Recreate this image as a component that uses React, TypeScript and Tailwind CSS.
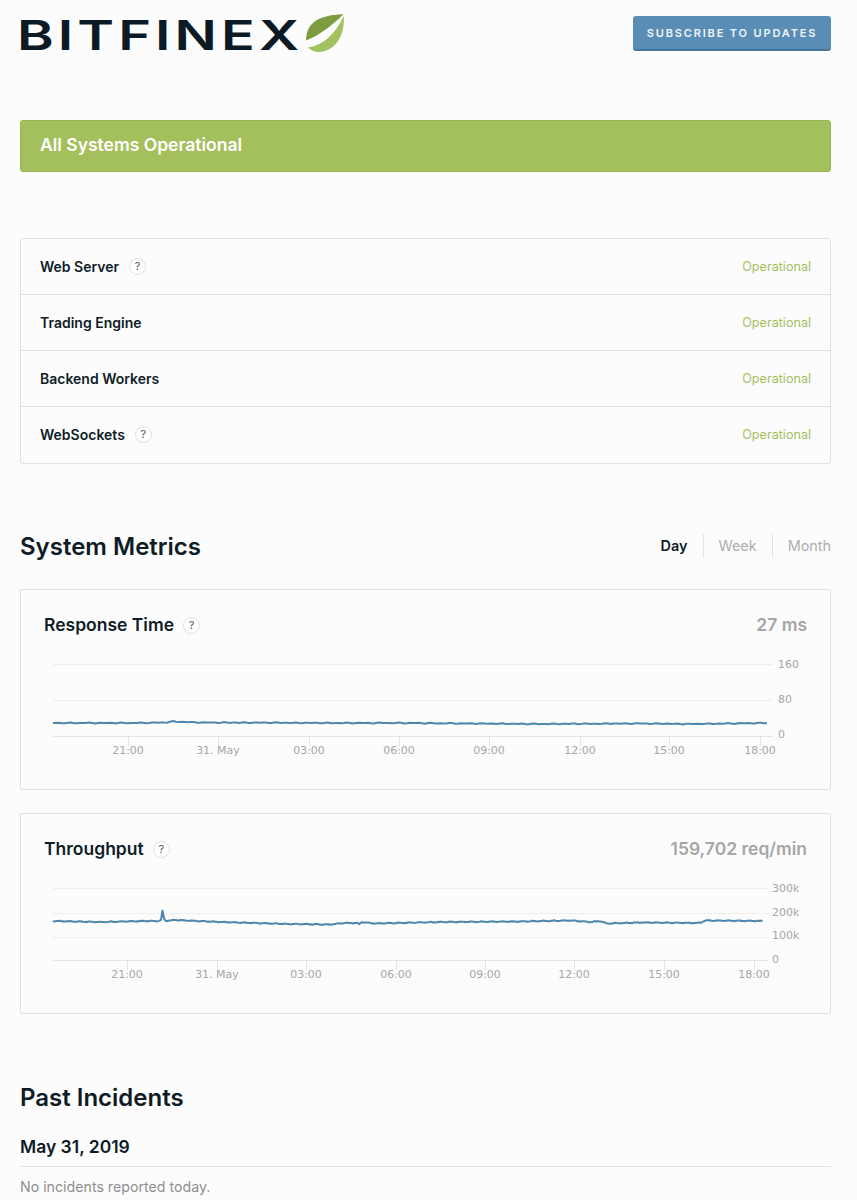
const services = [
  { name: 'Web Server', help: true, height: 'h-[55px]' },
  { name: 'Trading Engine', help: false, height: 'h-14 border-t border-[#e0e0e0]' },
  { name: 'Backend Workers', help: false, height: 'h-14 border-t border-[#e0e0e0]' },
  { name: 'WebSockets', help: true, height: 'h-[57px] border-t border-[#e0e0e0]' },
];

const timeLabels = ['21:00', '31. May', '03:00', '06:00', '09:00', '12:00', '15:00', '18:00'];

// small repeatable wobble so the lines look like real metrics
const wobble = (x: number) => Math.sin(x * 0.61) * 0.3 + Math.sin(x * 1.73 + 1) * 0.2;

const buildLine = (keys: number[][], step: number) => {
  const start = keys[0][0];
  const end = keys[keys.length - 1][0];
  const pts: string[] = [];
  for (let x = start; x <= end; x += step) {
    const i = keys.findIndex((k, n) => n < keys.length - 1 && x >= k[0] && x <= keys[n + 1][0]);
    const a = keys[i];
    const b = keys[i + 1];
    const y = a[1] + ((b[1] - a[1]) * (x - a[0])) / (b[0] - a[0]);
    pts.push(`${x},${(y + wobble(x)).toFixed(1)}`);
  }
  return pts.join(' ');
};

const responseLine = buildLine(
  [[53, 723], [140, 723], [165, 722.5], [172, 721.5], [200, 722.5], [340, 723], [400, 723], [540, 724], [640, 723.5], [690, 724], [768, 723]],
  3,
);

const throughputLine = buildLine(
  [
    [53, 921], [100, 922], [145, 921], [158, 921], [161, 920], [162.5, 911], [164.5, 921], [175, 920], [220, 922], [290, 924], [330, 924.5],
    [345, 923], [358, 923], [359.5, 925], [361, 922], [375, 923.5], [440, 922], [520, 921.5], [570, 920.5], [590, 922], [600, 921], [607, 923.5], [640, 922.5], [700, 923], [705, 920.5], [763, 921],
  ],
  1.5,
);

const HelpIcon = () => (
  <span className="inline-flex h-[17px] w-[17px] items-center justify-center rounded-full border border-[#e0e0e0] bg-white text-[11px] font-normal text-[#555]">?</span>
);

type ChartProps = {
  top: number;
  grid: number[];
  gridEnd: number;
  ticks: number[];
  labels: [string, number][];
  labelX: number;
  line: string;
};

const Chart = ({ top, grid, gridEnd, ticks, labels, labelX, line }: ChartProps) => {
  const axisY = grid[grid.length - 1];
  return (
    <svg width="809" height="120" viewBox={`21 ${top} 809 120`} className="block">
      {grid.map(y => (
        <line key={y} x1="53" x2={gridEnd} y1={y + 0.5} y2={y + 0.5} stroke={y === axisY ? '#e2e4e8' : '#eeeeee'} />
      ))}
      {ticks.map((x, i) => (
        <g key={x}>
          <line x1={x + 0.5} x2={x + 0.5} y1={axisY} y2={axisY + 10} stroke="#e2e4e8" />
          <text x={x} y={axisY + 18} textAnchor="middle" fontSize="11" fill="#a6a6a6" fontFamily="'DejaVu Sans', sans-serif">{timeLabels[i]}</text>
        </g>
      ))}
      {labels.map(([label, y]) => (
        <text key={label} x={labelX} y={y} fontSize="11" fill="#a6a6a6" fontFamily="'DejaVu Sans', sans-serif">{label}</text>
      ))}
      <polyline points={line} fill="none" stroke="#4f86ad" strokeWidth="2" strokeLinejoin="round" />
    </svg>
  );
};

export default function App() {
  return (
    <div className="min-h-[1200px] overflow-hidden bg-[#fcfcfc] pr-[26px] pl-5 font-['Inter',sans-serif] text-[#0f1c26]">
      <header className="flex h-[120px] items-start justify-between">
        <div className="flex items-start">
          <span className="mt-[10px] -ml-[3px] block h-[50px] w-[287px] origin-left scale-x-[1.36] text-[41px] leading-[50px] font-semibold tracking-[3px] text-[#0c1a26]">BITFINEX</span>
          <svg width="42" height="42" viewBox="0 0 42 42" className="mt-3 shrink-0">
            <path d="M39.5 2C28 3 10 4 4 18C2.5 22 2 25 2 28.5C14 24 28 14 39.5 2Z" fill="#7d9c40" />
            <path d="M39.8 4C41 20 34 38 16 40C11 40.5 7 38.5 4 35.5C20 33 31 22 39.8 4Z" fill="#a2c25f" />
          </svg>
        </div>
        <button className="mt-4 h-[35px] w-[198px] rounded-[3px] border-b-2 border-[#47769a] bg-[#5a8db5] pt-[2px] text-[11px] font-semibold tracking-[1.85px] text-[#eef4f8]">SUBSCRIBE TO UPDATES</button>
      </header>

      <div className="flex h-[52px] items-center rounded-[3px] border border-[#97b553] bg-[#a4c05c] px-[19px] pb-[1px] text-[17.5px] font-semibold text-white">All Systems Operational</div>

      <div className="mt-[66px] rounded-[3px] border border-[#e0e0e0]">
        {services.map(s => (
          <div key={s.name} className={`flex items-center justify-between px-[19px] ${s.height}`}>
            <div className="flex items-center gap-[10px] pb-[1px] text-[14px] font-semibold">
              {s.name}
              {s.help && <HelpIcon />}
            </div>
            <span className="pt-[1px] text-[12.6px] text-[#a4c05c]">Operational</span>
          </div>
        ))}
      </div>

      <div className="mt-[65px] flex h-[34px] items-center justify-between">
        <h2 className="pt-[1px] text-[24px] font-semibold">System Metrics</h2>
        <div className="flex items-center text-[14.4px] text-[#aeaeae]">
          <span className="h-6 border-r border-[#e3e3e3] pr-[15px] leading-6 font-semibold text-[#0f1c26]">Day</span>
          <span className="h-6 border-r border-[#e3e3e3] px-[15px] leading-6">Week</span>
          <span className="h-6 pl-[15px] leading-6">Month</span>
        </div>
      </div>

      <div className="mt-[26px] h-[201px] rounded-[2px] border border-[#e0e0e0] pt-5">
        <div className="flex h-[30px] items-center justify-between px-[23px]">
          <div className="flex items-center gap-[9px] text-[17.5px] font-semibold">Response Time <HelpIcon /></div>
          <span className="text-[17.5px] font-semibold text-[#a6a6a6]">27 ms</span>
        </div>
        <div className="mt-2">
          <Chart
            top={648}
            grid={[664, 700, 736]}
            gridEnd={773}
            ticks={[128, 218, 309, 399, 489, 580, 669, 760]}
            labels={[['160', 668], ['80', 703], ['0', 738]]}
            labelX={778}
            line={responseLine}
          />
        </div>
      </div>

      <div className="mt-[23px] h-[201px] rounded-[2px] border border-[#e0e0e0] pt-5">
        <div className="flex h-[30px] items-center justify-between px-[23px]">
          <div className="flex items-center gap-[9px] text-[17.5px] font-semibold">Throughput <HelpIcon /></div>
          <span className="text-[17.5px] font-semibold text-[#a6a6a6]">159,702 req/min</span>
        </div>
        <div className="mt-2">
          <Chart
            top={872}
            grid={[888, 913, 937, 960]}
            gridEnd={768}
            ticks={[127, 217, 306, 396, 485, 574, 664, 754]}
            labels={[['300k', 892], ['200k', 916], ['100k', 939], ['0', 963]]}
            labelX={772}
            line={throughputLine}
          />
        </div>
      </div>

      <h2 className="mt-[67px] h-[33px] text-[24px] leading-[34px] font-semibold">Past Incidents</h2>
      <div className="mt-[21px] border-b border-[#e0e0e0] pb-[7px] text-[17.5px] leading-6 font-semibold">May 31, 2019</div>
      <p className="mt-[10px] text-[14.2px] leading-5 text-[#8f8f8f]">No incidents reported today.</p>
    </div>
  );
}
